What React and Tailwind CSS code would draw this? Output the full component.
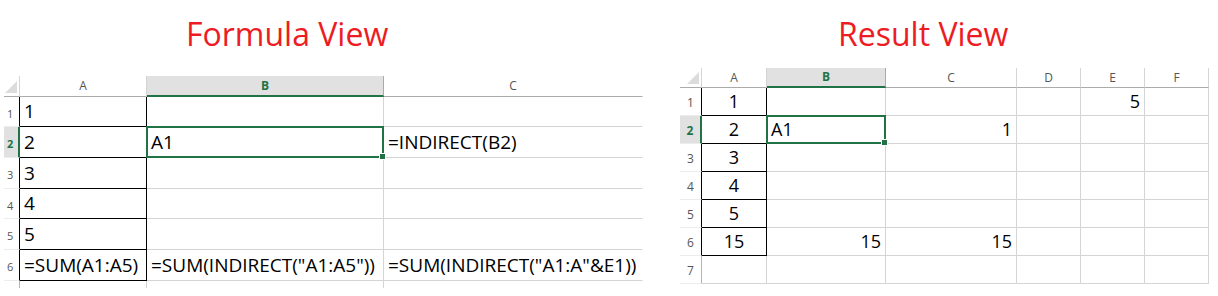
const RB = {
  grid: 'border-r border-r-[#d4d4d4]',
  black: 'border-r border-r-black',
  hdr: 'border-r border-r-[#d4d4d4]',
  rowhdr: 'border-r border-r-[#b4b4b4]',
  green: 'border-r-2 border-r-[#217346]',
  none: 'border-r border-r-transparent',
};

const BB = {
  grid: 'border-b border-b-[#d4d4d4]',
  black: 'border-b border-b-black',
  hdr: 'border-b border-b-[#ababab]',
  green: 'border-b-2 border-b-[#217346]',
  faint: 'border-b border-b-[#ececec]',
  none: 'border-b border-b-transparent',
};

const ALIGN = {
  left: 'justify-start pl-[4px]',
  right: 'justify-end pr-[4px]',
  center: 'justify-center',
};

function Cell({ r = 'grid', b = 'grid', align = 'left', children, className = '', selected }) {
  return (
    <div
      className={`relative flex items-center min-w-0 whitespace-nowrap ${RB[r]} ${BB[b]} ${ALIGN[align]} ${className}`}
    >
      {children}
      {selected && (
        <div className="pointer-events-none absolute -top-[1px] -left-[1px] -right-[1px] -bottom-[1px] border-2 border-[#217346] z-10">
          <div className="absolute -right-[4px] -bottom-[4px] w-[7px] h-[7px] bg-[#217346] border border-white" />
        </div>
      )}
    </div>
  );
}

function Corner({ r, b }) {
  return (
    <div className={`relative ${RB[r]} ${BB[b]}`}>
      <svg className="absolute right-[2px] bottom-[3px]" width="12" height="12" viewBox="0 0 12 12">
        <polygon points="12,0 12,12 0,12" fill="#dcdcdc" />
      </svg>
    </div>
  );
}

function ColHead({ label, active, last }) {
  if (active) {
    return (
      <div className="flex items-center justify-center bg-[#e1e1e1] border-r border-r-[#ababab] border-b-2 border-b-[#217346] text-[12px] font-bold text-[#217346]">
        {label}
      </div>
    );
  }
  return (
    <div
      className={`flex items-center justify-center text-[12px] text-[#555] ${last ? 'border-r border-r-transparent' : 'border-r border-r-[#d4d4d4]'} border-b border-b-[#ababab]`}
    >
      {label}
    </div>
  );
}

function FormulaSheet() {
  const rows = [
    ['1', '', ''],
    ['2', 'A1', '=INDIRECT(B2)'],
    ['3', '', ''],
    ['4', '', ''],
    ['5', '', ''],
    ['=SUM(A1:A5)', '=SUM(INDIRECT("A1:A5"))', '=SUM(INDIRECT("A1:A"&E1))'],
  ];
  return (
    <div
      className="grid grid-cols-[16px_127px_237px_259px] grid-rows-[21px_30px_31px_31px_30px_31px_31px_7px] text-[19px] text-black"
      style={{ fontFamily: '"Open Sans", "Noto Sans", sans-serif' }}
    >
      <Corner r="hdr" b="hdr" />
      <ColHead label="A" />
      <ColHead label="B" active />
      <ColHead label="C" last />
      {rows.map((row, i) => {
        const n = i + 1;
        const sel = n === 2;
        return [
          <div
            key={`h${n}`}
            className={`flex items-center pl-[3px] pt-[5px] text-[11px] ${sel ? 'bg-[#e1e1e1] font-bold text-[#217346] border-r-2 border-r-[#217346]' : 'text-[#555] border-r border-r-black'} border-b border-b-[#ececec]`}
          >
            {n}
          </div>,
          <Cell key={`a${n}`} r="black" b="black">
            {row[0]}
          </Cell>,
          <Cell key={`b${n}`} b="grid" selected={sel}>
            {row[1]}
          </Cell>,
          <Cell key={`c${n}`} r="none" b="grid" className="pl-[2px]">
            {row[2]}
          </Cell>,
        ];
      })}
      <div className="border-r border-r-[#b4b4b4]" />
      <div className="border-r border-r-[#d4d4d4]" />
      <div className="border-r border-r-[#d4d4d4]" />
      <div />
    </div>
  );
}

function ResultSheet() {
  const rows = [
    { a: '1', b: '', c: '', e: '5' },
    { a: '2', b: 'A1', c: '1', e: '' },
    { a: '3', b: '', c: '', e: '' },
    { a: '4', b: '', c: '', e: '' },
    { a: '5', b: '', c: '', e: '' },
    { a: '15', b: '15', c: '15', e: '' },
    { a: '', b: '', c: '', e: '', last: true },
  ];
  return (
    <div
      className="grid grid-cols-[22px_65px_119px_131px_64px_64px_64px] grid-rows-[20px_28px_28px_28px_28px_28px_28px_28px] text-[18px] text-black"
      style={{ fontFamily: '"Open Sans", "Noto Sans", sans-serif' }}
    >
      <Corner r="hdr" b="hdr" />
      <ColHead label="A" />
      <ColHead label="B" active />
      <ColHead label="C" />
      <ColHead label="D" />
      <ColHead label="E" />
      <ColHead label="F" />
      {rows.map((row, i) => {
        const n = i + 1;
        const sel = n === 2;
        return [
          <div
            key={`h${n}`}
            className={`flex items-center justify-center pt-[2px] text-[12px] ${sel ? 'bg-[#e1e1e1] font-bold text-[#217346] border-r-2 border-r-[#217346]' : `text-[#555] border-r ${row.last ? 'border-r-[#b4b4b4]' : 'border-r-black'}`} border-b border-b-[#ececec]`}
          >
            {n}
          </div>,
          <Cell key={`a${n}`} r={row.last ? 'grid' : 'black'} b={row.last ? 'grid' : 'black'} align="center">
            {row.a}
          </Cell>,
          <Cell key={`b${n}`} align={sel ? 'left' : 'right'} selected={sel}>
            {row.b}
          </Cell>,
          <Cell key={`c${n}`} align="right">
            {row.c}
          </Cell>,
          <Cell key={`d${n}`} />,
          <Cell key={`e${n}`} align="right">
            {row.e}
          </Cell>,
          <Cell key={`f${n}`} />,
        ];
      })}
    </div>
  );
}

export default function App() {
  return (
    <div className="w-[1218px] h-[296px] bg-white flex overflow-hidden">
      {/* Formula View */}
      <div className="w-[660px] flex flex-col">
        <div
          className="ml-[186px] mt-[14px] h-[40px] leading-[40px] text-[32px] text-[#ed1c24]"
          style={{ fontFamily: '"Open Sans", "Noto Sans", sans-serif' }}
        >
          Formula View
        </div>
        <div className="ml-[4px] mt-[22px]">
          <FormulaSheet />
        </div>
      </div>

      {/* Result View */}
      <div className="flex-1 flex flex-col">
        <div
          className="ml-[178px] mt-[14px] h-[40px] leading-[40px] text-[32px] text-[#ed1c24]"
          style={{ fontFamily: '"Open Sans", "Noto Sans", sans-serif' }}
        >
          Result View
        </div>
        <div className="ml-[20px] mt-[14px]">
          <ResultSheet />
        </div>
      </div>
    </div>
  );
}
